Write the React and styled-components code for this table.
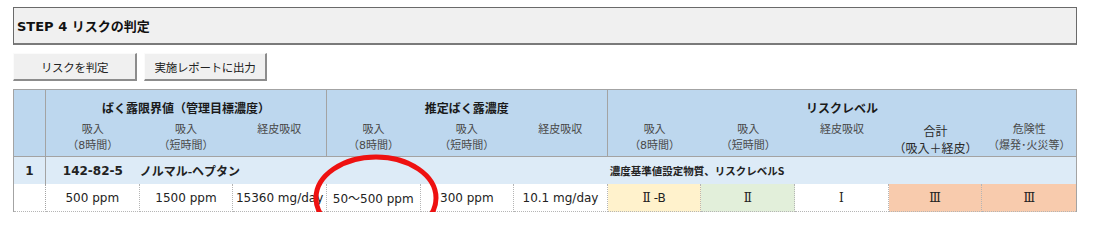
import React from "react";
import styled, { createGlobalStyle } from "styled-components";

const GlobalStyle = createGlobalStyle`
  body {
    margin: 0;
    background: #ffffff;
    font-family: "DejaVu Sans", "Noto Sans CJK JP", sans-serif;
    color: #222;
  }
`;

const LINE = "#a3a3a3";
const DOT = "#b5b5b5";

const Page = styled.div`
  position: relative;
  width: 1064px;
  padding: 7px 0 0 13px;
`;

const TitleBox = styled.div`
  box-sizing: border-box;
  height: 38px;
  display: flex;
  align-items: center;
  padding-left: 3px;
  background: #f0f0f0;
  border: 1px solid #6a6a6a;
  border-bottom: 2px solid #7a7a7a;
  font-size: 13px;
  font-weight: bold;
  color: #111;
`;

const ButtonRow = styled.div`
  display: flex;
  gap: 7px;
  margin-top: 8px;
`;

const Button = styled.button`
  box-sizing: border-box;
  width: ${(p) => p.$w}px;
  height: 28px;
  padding: 0;
  background: #f0f0f0;
  border: 1px solid;
  border-color: #fbfbfb #8c8c8c #8c8c8c #fbfbfb;
  border-right-width: 2px;
  border-bottom-width: 2px;
  font-family: "Noto Sans CJK JP", sans-serif;
  font-size: 11.5px;
  letter-spacing: -0.3px;
  color: #222;
`;

const Grid = styled.div`
  box-sizing: border-box;
  width: 1064px;
  margin-top: 8px;
  display: grid;
  grid-template-columns: 32px repeat(11, 1fr);
  border-left: 1px solid ${LINE};
  border-right: 1px solid ${LINE};
  border-top: 1px solid ${LINE};
`;

const NumHead = styled.div`
  height: 66px;
  background: #bdd7ee;
  border-right: 1px solid ${LINE};
  border-bottom: 1px solid ${LINE};
`;

const Group = styled.div`
  grid-column: span ${(p) => p.$span};
  display: grid;
  grid-template-columns: repeat(${(p) => p.$span}, 1fr);
  grid-template-rows: 32px 34px;
  background: #bdd7ee;
  border-right: ${(p) => (p.$last ? "none" : `1px solid ${LINE}`)};
  border-bottom: 1px solid ${LINE};
`;

const GroupTitle = styled.div`
  grid-column: 1 / -1;
  padding-top: 10px;
  text-align: center;
  font-family: "Noto Sans CJK JP", sans-serif;
  font-size: 12px;
  font-weight: bold;
  line-height: 16px;
  color: #1a1a1a;
`;

const SubLabel = styled.div`
  text-align: center;
  font-family: "DejaVu Sans", "Noto Sans CJK JP", sans-serif;
  font-size: ${(p) => (p.$big ? 12 : 11)}px;
  line-height: ${(p) => (p.$big ? 17 : 16)}px;
  padding-top: ${(p) => (p.$big ? 2 : 0)}px;
  color: ${(p) => (p.$big ? "#2a2a2a" : "#4a4a4a")};
  white-space: nowrap;
`;

const NumCell = styled.div`
  height: 27px;
  display: flex;
  align-items: center;
  justify-content: center;
  background: ${(p) => (p.$blue ? "#ddebf7" : "#ffffff")};
  border-right: 1px ${(p) => (p.$blue ? "solid" : "dotted")} ${LINE};
  border-bottom: ${(p) => (p.$blue ? "none" : `1px dotted ${DOT}`)};
  font-size: 12px;
  font-weight: bold;
`;

const SubstanceRow = styled.div`
  grid-column: span 11;
  display: grid;
  grid-template-columns: repeat(11, 1fr);
  align-items: center;
  height: 27px;
  background: #ddebf7;
  font-weight: bold;
  white-space: nowrap;
`;

const Cas = styled.div`
  text-align: center;
  font-size: 12px;
`;

const Name = styled.div`
  grid-column: span 5;
  font-family: "Noto Sans CJK JP", sans-serif;
  font-size: 12px;
`;

const Note = styled.div`
  grid-column: span 5;
  padding-left: 2px;
  font-family: "Noto Sans CJK JP", sans-serif;
  font-size: 10.5px;
`;

const DataCell = styled.div`
  height: 27px;
  display: flex;
  align-items: center;
  justify-content: center;
  background: ${(p) => p.$bg || "#ffffff"};
  border-right: ${(p) => (p.$last ? "none" : `1px dotted ${DOT}`)};
  border-bottom: 1px dotted ${DOT};
  font-size: 12px;
  color: #222;
  white-space: nowrap;
`;

const Roman = styled.span`
  font-family: "DejaVu Serif", "Liberation Serif", serif;
  font-size: 12px;
  margin-right: ${(p) => (p.$gap ? 3 : 0)}px;
`;

const Marker = styled.svg`
  position: absolute;
  left: 313px;
  top: 154px;
  pointer-events: none;
`;

const groups = [
  {
    title: "ばく露限界値（管理目標濃度）",
    subs: [["吸入", "（8時間）"], ["吸入", "（短時間）"], ["経皮吸収"]],
  },
  {
    title: "推定ばく露濃度",
    subs: [["吸入", "（8時間）"], ["吸入", "（短時間）"], ["経皮吸収"]],
  },
  {
    title: "リスクレベル",
    subs: [
      ["吸入", "（8時間）"],
      ["吸入", "（短時間）"],
      ["経皮吸収"],
      ["合計", "（吸入＋経皮）", true],
      ["危険性", "（爆発･火災等）"],
    ],
  },
];

const values = [
  { v: "500 ppm" },
  { v: "1500 ppm" },
  { v: "15360 mg/day" },
  { v: "50～500 ppm" },
  { v: "300 ppm" },
  { v: "10.1 mg/day" },
  { roman: "Ⅱ", rest: "-B", bg: "#fff2cc" },
  { roman: "Ⅱ", bg: "#e2efda" },
  { roman: "Ⅰ" },
  { roman: "Ⅲ", bg: "#f8cbad" },
  { roman: "Ⅲ", bg: "#f8cbad" },
];

export default function App() {
  return (
    <Page>
      <GlobalStyle />
      <TitleBox>STEP 4 リスクの判定</TitleBox>

      <ButtonRow>
        <Button $w={124}>リスクを判定</Button>
        <Button $w={123}>実施レポートに出力</Button>
      </ButtonRow>

      <Grid>
        {/* header */}
        <NumHead />
        {groups.map((g, gi) => (
          <Group key={g.title} $span={g.subs.length} $last={gi === groups.length - 1}>
            <GroupTitle>{g.title}</GroupTitle>
            {g.subs.map(([a, b, big], i) => (
              <SubLabel key={i} $big={big}>
                {a}
                {b && <br />}
                {b}
              </SubLabel>
            ))}
          </Group>
        ))}

        {/* substance */}
        <NumCell $blue>1</NumCell>
        <SubstanceRow>
          <Cas>142-82-5</Cas>
          <Name>ノルマル-ヘプタン</Name>
          <Note>濃度基準値設定物質、リスクレベルS</Note>
        </SubstanceRow>

        {/* values */}
        <NumCell />
        {values.map((c, i) => (
          <DataCell key={i} $bg={c.bg} $last={i === values.length - 1}>
            {c.roman ? (
              <>
                <Roman $gap={!!c.rest}>{c.roman}</Roman>
                {c.rest}
              </>
            ) : (
              c.v
            )}
          </DataCell>
        ))}
      </Grid>

      <Marker width="128" height="92" viewBox="0 0 128 92">
        <ellipse cx="63" cy="44" rx="60" ry="41" fill="none" stroke="#ee1111" strokeWidth="5" />
      </Marker>
    </Page>
  );
}
